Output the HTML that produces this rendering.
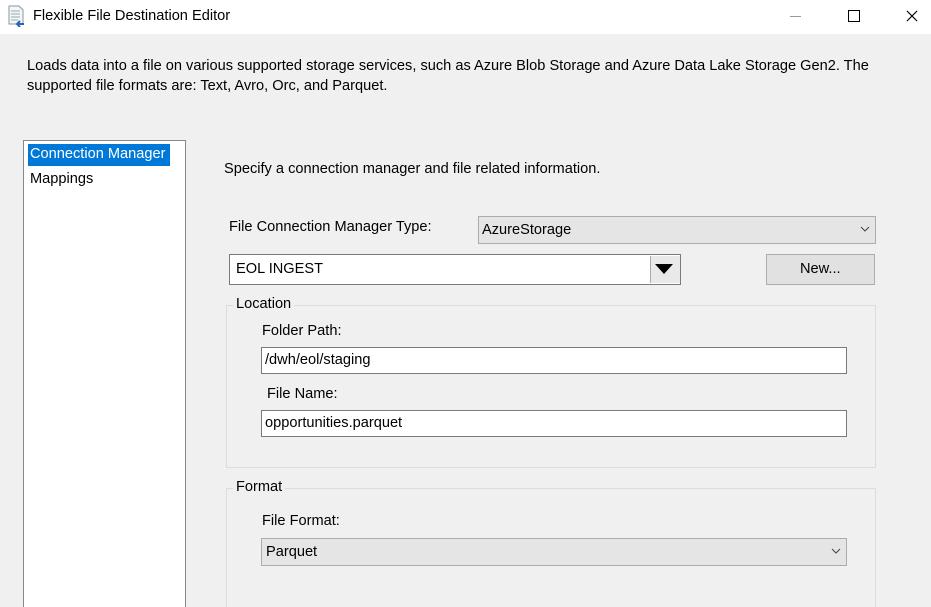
<!DOCTYPE html>
<html><head><style>
html,body{margin:0;width:931px;height:607px;overflow:hidden}
body{background:#f0f0f0;font-family:"Liberation Sans",sans-serif;font-size:14.6px;color:#000;position:relative}
.a{position:absolute;white-space:nowrap}
.box{position:absolute;background:#fff;border:1px solid #7a7a7a;box-sizing:border-box}
.grp{position:absolute;border:1px solid #dcdcdc;box-sizing:border-box}
.lg{position:absolute;background:#f0f0f0;padding:0 3px;top:-10px;left:6px}
</style></head><body>
<div class="a" style="left:0;top:0;width:931px;height:34px;background:#fff"></div>
<svg class="a" style="left:8px;top:5px" width="18" height="22" viewBox="0 0 18 22"><path d="M1 1h10l4 4v14H1z" fill="#f4f6f8" stroke="#8a96a3"/><path d="M3 6h9M3 9h9M3 12h9M3 15h7" stroke="#9aa" /><path d="M9 19h7M12 16l-3 3 3 3" stroke="#2a62b8" stroke-width="2" fill="none"/></svg>
<div class="a" style="left:33px;top:8px;font-size:14.6px">Flexible File Destination Editor</div>
<div class="a" style="left:790px;top:16px;width:11px;height:1px;background:#999"></div>
<div class="a" style="left:848px;top:10px;width:10px;height:10px;border:1px solid #000"></div>
<svg class="a" style="left:906px;top:10px" width="12" height="12"><path d="M1 1l10 10M11 1L1 11" stroke="#000" stroke-width="1.2"/></svg>
<div class="a" style="left:27px;top:56px;line-height:20px">Loads data into a file on various supported storage services, such as Azure Blob Storage and Azure Data Lake Storage Gen2. The<br>supported file formats are: Text, Avro, Orc, and Parquet.</div>
<div class="box" style="left:23px;top:140px;width:163px;height:480px;border-color:#828790"></div>
<div class="a" style="left:28px;top:144px;width:142px;height:22px;background:#0078d7"></div>
<div class="a" style="left:30px;top:146px;color:#fff">Connection Manager</div>
<div class="a" style="left:30px;top:171px">Mappings</div>
<div class="a" style="left:224px;top:161px">Specify a connection manager and file related information.</div>
<div class="a" style="left:229px;top:219px">File Connection Manager Type:</div>
<div class="box" style="left:478px;top:216px;width:398px;height:28px;background:#e5e5e5;border-color:#acacac"></div>
<div class="a" style="left:482px;top:222px">AzureStorage</div>
<svg class="a" style="left:860px;top:226px" width="10" height="7"><path d="M1 1l4 4 4-4" stroke="#444" fill="none"/></svg>
<div class="box" style="left:229px;top:254px;width:452px;height:31px;border-color:#7a7a7a"></div>
<div class="a" style="left:236px;top:261px">EOL INGEST</div>
<div class="a" style="left:650px;top:256px;width:29px;height:27px;background:#e9e9e9;border-left:1px solid #aaa"></div>
<svg class="a" style="left:655px;top:264px" width="18" height="10"><path d="M0 0h18L9 10z" fill="#000"/></svg>
<div class="box" style="left:766px;top:254px;width:109px;height:31px;background:#e1e1e1;border-color:#adadad"></div>
<div class="a" style="left:800px;top:261px">New...</div>
<div class="grp" style="left:226px;top:305px;width:650px;height:163px"><div class="lg" style="left:6px">Location</div></div>
<div class="a" style="left:262px;top:323px">Folder Path:</div>
<div class="box" style="left:261px;top:347px;width:586px;height:27px"></div>
<div class="a" style="left:265px;top:352px">/dwh/eol/staging</div>
<div class="a" style="left:267px;top:386px">File Name:</div>
<div class="box" style="left:261px;top:410px;width:586px;height:27px"></div>
<div class="a" style="left:265px;top:415px">opportunities.parquet</div>
<div class="grp" style="left:226px;top:488px;width:650px;height:140px"><div class="lg" style="left:6px">Format</div></div>
<div class="a" style="left:262px;top:513px">File Format:</div>
<div class="box" style="left:261px;top:538px;width:586px;height:28px;background:#e5e5e5;border-color:#acacac"></div>
<div class="a" style="left:266px;top:544px">Parquet</div>
<svg class="a" style="left:831px;top:548px" width="10" height="7"><path d="M1 1l4 4 4-4" stroke="#444" fill="none"/></svg>
</body></html>
